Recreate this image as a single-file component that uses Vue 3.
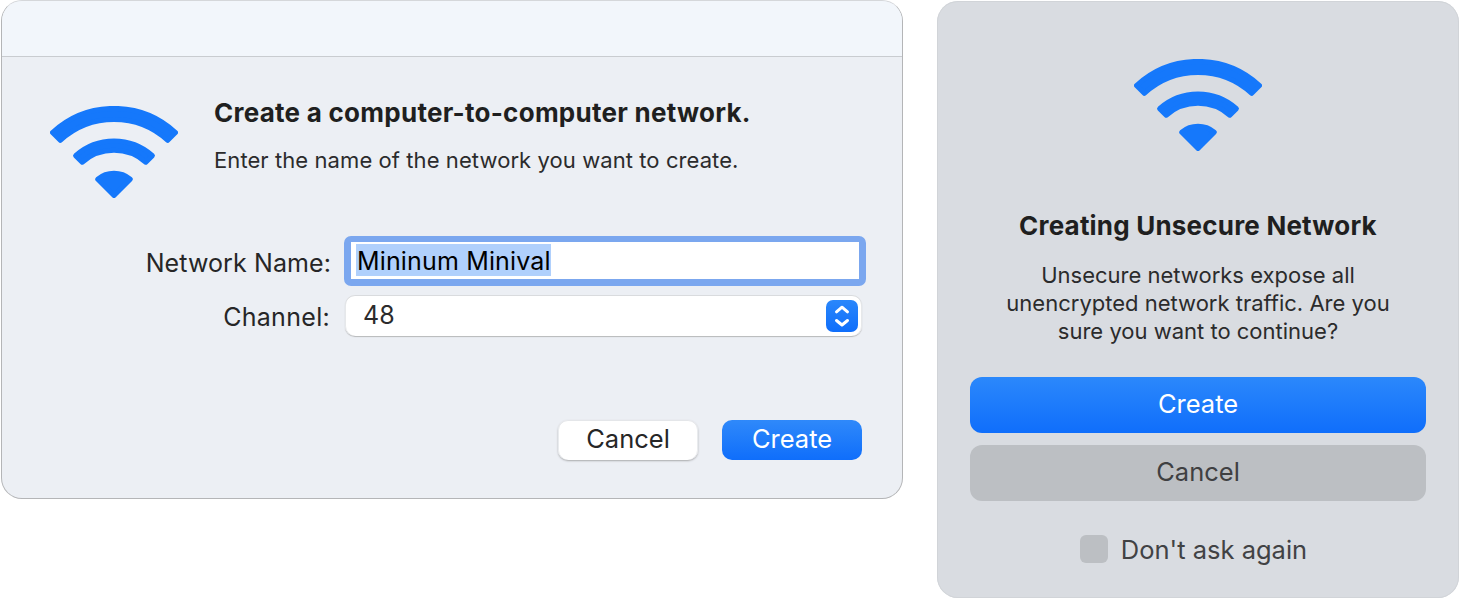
<template>
  <div class="page">
    <section class="sheet">
      <header class="sheet-bar"></header>
      <div class="sheet-body">
        <div class="intro">
          <svg class="wifi" viewBox="0 0 128 92">
            <path v-for="d in wifiPaths" :d="d" />
          </svg>
          <div class="intro-text">
            <h1>Create a computer-to-computer network.</h1>
            <p>Enter the name of the network you want to create.</p>
          </div>
        </div>

        <div class="form">
          <label class="name-label">Network Name:</label>
          <div class="name-field">
            <span class="selected">{{ networkName }}</span>
          </div>
          <label class="channel-label">Channel:</label>
          <div class="channel-field">
            <span class="channel-value">{{ channel }}</span>
            <span class="stepper">
              <svg viewBox="0 0 32 32">
                <path d="M10.5 11.800 16 7.200l5.500 4.600" />
                <path d="M10.500 20.500 16 25l5.500-4.500" />
              </svg>
            </span>
          </div>
        </div>

        <div class="sheet-actions">
          <button class="btn-cancel">Cancel</button>
          <button class="btn-create">Create</button>
        </div>
      </div>
    </section>

    <section class="alert">
      <svg class="wifi" viewBox="0 0 128 92">
        <path v-for="d in wifiPaths" :d="d" />
      </svg>
      <h2>Creating Unsecure Network</h2>
      <p>
        Unsecure networks expose all<br />
        unencrypted network traffic. Are you<br />
        sure you want to continue?
      </p>
      <button class="alert-btn primary">Create</button>
      <button class="alert-btn secondary">Cancel</button>
      <div class="ask">
        <span class="checkbox"></span>
        <span class="ask-text">Don't ask again</span>
      </div>
    </section>
  </div>
</template>

<script setup>
import { ref } from "vue";

const networkName = ref("Mininum Minival");
const channel = ref(48);

const wifiPaths = [
  "M2.48 26.54A90.500 90.500 0 0 1 125.52 26.54L117.74 34.32A79.500 79.500 0 0 0 10.26 34.32Z",
  "M25.6 49.66A57.800 57.800 0 0 1 102.4 49.66L95.82 56.24A48.500 48.500 0 0 0 32.18 56.24Z",
  "M47.74 73.2A25.500 25.500 0 0 1 80.26 73.2L64 89.46Z",
];
</script>

<style>
html,
body {
  background: #fff;
}
</style>

<style scoped>
.page {
  display: flex;
  align-items: flex-start;
  gap: 34px;
  padding-left: 1px;
  width: 1459px;
  height: 598px;
  box-sizing: border-box;
  overflow: hidden;
  font-family: Inter, "Liberation Sans", sans-serif;
}

.wifi {
  display: block;
  width: 128px;
  height: 92px;
  flex: none;
}

.wifi path {
  fill: #1578fb;
  stroke: #1578fb;
  stroke-width: 5;
  stroke-linejoin: round;
}

.sheet {
  width: 902px;
  height: 499px;
  box-sizing: border-box;
  border: 1px solid #b4b5b7;
  border-top-color: #d5d7da;
  border-radius: 21px;
  background: #eceff4;
  overflow: hidden;
  display: flex;
  flex-direction: column;
}

.sheet-bar {
  height: 56px;
  flex: none;
  box-sizing: border-box;
  background: #f2f6fb;
  border-bottom: 1px solid #c9ccd0;
}

.sheet-body {
  flex: 1;
  display: flex;
  flex-direction: column;
  padding: 49px 40px 38px 48px;
}

.intro {
  display: flex;
  gap: 36px;
  height: 92px;
}

h1 {
  margin: -8px 0 0;
  font-size: 26px;
  line-height: 30px;
  font-weight: 700;
  color: #1f1f20;
  letter-spacing: 0.26px;
  white-space: nowrap;
}

.intro-text p {
  margin: 20px 0 0;
  font-size: 22px;
  line-height: 24px;
  color: #2b2b2c;
  letter-spacing: 0.08px;
  white-space: nowrap;
}

.form {
  display: grid;
  grid-template-columns: 280px 518px;
  grid-template-rows: 50px 41px;
  row-gap: 9px;
  column-gap: 15px;
  margin-top: 38px;
  align-items: center;
  font-size: 25px;
  color: #262627;
}

.name-label,
.channel-label {
  text-align: right;
  justify-self: end;
  white-space: nowrap;
  letter-spacing: 0.1px;
}

.name-label {
  padding-top: 4px;
  margin-right: -1px;
}

.channel-label {
  padding-top: 2px;
  letter-spacing: 0.3px;
}

.name-field {
  box-sizing: border-box;
  width: 522px;
  height: 50px;
  margin-left: -1px;
  background: #fff;
  border: solid #7ba7ef;
  border-width: 6px 7px 7px;
  border-radius: 7px;
  padding: 2px 5px;
  color: #000;
  display: flex;
}

.selected {
  background: #b0d0fc;
  height: 32px;
  line-height: 35px;
  letter-spacing: 0.15px;
  padding: 0 0 0 1px;
}

.channel-field {
  box-sizing: border-box;
  width: 517px;
  height: 41px;
  background: #fff;
  border-radius: 10px;
  box-shadow: inset 0 1px 0 #d9dbde, inset 1px 0 0 #e6e8ea, inset -1px 0 0 #e6e8ea, 0 1px 1px #b7b8ba;
  padding: 0 4px 0 18px;
  display: flex;
  align-items: center;
  justify-content: space-between;
  color: #2b2b2c;
}

.channel-value {
  padding-bottom: 2px;
}

.stepper {
  width: 32px;
  height: 32px;
  border-radius: 7px;
  background: linear-gradient(#2a87fb, #0f6efb);
}

.stepper svg {
  display: block;
  width: 32px;
  height: 32px;
}

.stepper path {
  fill: none;
  stroke: #fff;
  stroke-width: 3;
  stroke-linecap: round;
  stroke-linejoin: round;
}

.sheet-actions {
  display: flex;
  justify-content: flex-end;
  gap: 24px;
  margin-top: auto;
}

button {
  border: 0;
  padding: 0;
  font-family: inherit;
}

.sheet-actions button {
  width: 140px;
  height: 40px;
  border-radius: 10px;
  font-size: 25.5px;
  padding-bottom: 4px;
}

.btn-cancel {
  background: #fff;
  color: #262627;
  box-shadow: inset 0 1px 0 #e4e6e9, inset 1px 0 0 #e9ebee, inset -1px 0 0 #e9ebee, 0 1px 2px #a9aaac;
}

.btn-create {
  background: linear-gradient(#2f89fa, #0f6efb);
  color: #fff;
}

.alert {
  width: 522px;
  height: 597px;
  margin-top: 1px;
  box-sizing: border-box;
  border-radius: 21px;
  background: #d9dce1;
  box-shadow: inset 0 0 0 1px #d1d4d8;
  padding: 58px 33px 0;
  display: flex;
  flex-direction: column;
  align-items: center;
}

h2 {
  margin: 57px 0 0;
  font-size: 26px;
  line-height: 36px;
  font-weight: 700;
  color: #1f1f20;
  letter-spacing: 0.2px;
  white-space: nowrap;
}

.alert p {
  margin: 17px 0 0;
  text-align: center;
  font-size: 22px;
  line-height: 28px;
  color: #2b2b2c;
}

.alert-btn {
  width: 456px;
  height: 56px;
  flex: none;
  border-radius: 12px;
  font-size: 25.5px;
  padding-bottom: 4px;
}

.primary {
  margin-top: 32px;
  background: linear-gradient(#2b88fb, #0f6efb);
  color: #fff;
}

.secondary {
  margin-top: 12px;
  background: #bcbfc3;
  color: #3f4042;
}

.ask {
  display: flex;
  align-items: flex-start;
  gap: 13px;
  margin-top: 34px;
  padding-right: 9px;
  font-size: 25.5px;
  color: #414244;
}

.ask-text {
  line-height: 30px;
}

.checkbox {
  width: 28px;
  height: 28px;
  border-radius: 6px;
  background: #bcbfc3;
}
</style>
